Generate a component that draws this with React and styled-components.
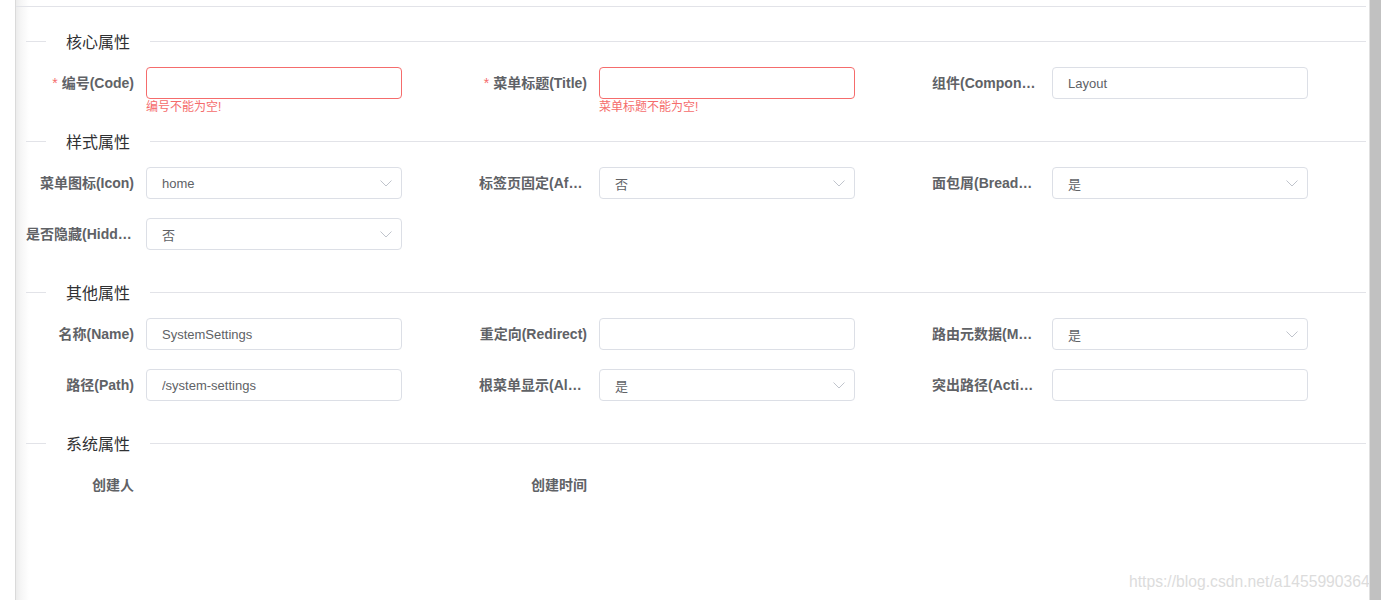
import React from 'react';
import styled, { createGlobalStyle } from 'styled-components';

const GlobalStyle = createGlobalStyle`
  html, body {
    margin: 0;
    padding: 0;
    height: 100%;
    overflow: hidden;
    background: #fff;
  }
  body {
    font-family: "Liberation Sans", Arial, "Noto Sans CJK SC", sans-serif;
    -webkit-font-smoothing: antialiased;
  }
  * { box-sizing: border-box; }
`;

const Page = styled.div`
  position: relative;
  display: flex;
  height: 600px;
  width: 100%;
  background: #fff;
`;

const Gutter = styled.div`
  width: 15px;
  flex: none;
  background: #fff;
`;

const Panel = styled.div`
  flex: 1;
  min-width: 0;
  overflow: hidden;
  border-left: 1px solid #dadada;
  background: linear-gradient(to right, #ececec 0, #f6f6f6 5px, #fff 13px) no-repeat;
  background-size: 13px 100%;
`;

const TopStrip = styled.div`
  height: 7px;
  border-bottom: 1px solid #e2e3e8;
`;

const Content = styled.div`
  padding: 0 0 0 10px;
`;

const Section = styled.section`
  display: flex;
  flex-direction: column;
`;

const SectionHeader = styled.div`
  display: flex;
  align-items: center;
  height: 21px;
  margin-top: ${p => (p.$first ? '24px' : '13px')};
  margin-bottom: 15px;
`;

const Rule = styled.div`
  height: 1px;
  background: #e2e3e8;
  width: ${p => p.$w || 'auto'};
  flex: ${p => (p.$grow ? 1 : 'none')};
`;

const SectionTitle = styled.span`
  margin: 0 20px;
  font-size: 16px;
  line-height: 21px;
  color: #303133;
  font-family: "Noto Sans CJK SC", sans-serif;
  font-weight: 400;
  white-space: nowrap;
`;

const Grid = styled.div`
  display: grid;
  grid-template-columns: repeat(3, 453px);
  row-gap: 19px;
  margin-bottom: 19px;
`;

const FormItem = styled.div`
  display: flex;
  align-items: flex-start;
  height: 32px;
`;

const Label = styled.label`
  flex: none;
  width: 120px;
  padding-right: 12px;
  height: 32px;
  line-height: 32px;
  text-align: right;
  font-size: 14px;
  font-weight: 700;
  color: #606266;
  white-space: nowrap;
  overflow: hidden;
  text-overflow: ellipsis;

  ${p => p.$required && `
    &::before {
      content: '*';
      color: #f56c6c;
      margin-right: 4px;
      font-weight: 400;
    }
  `}
`;

const Control = styled.div`
  position: relative;
  width: 256px;
  height: 32px;
`;

const Input = styled.input`
  display: block;
  width: 100%;
  height: 32px;
  padding: 0 30px 0 15px;
  border: 1px solid ${p => (p.$error ? '#f56c6c' : '#dcdfe6')};
  border-radius: 4px;
  background: #fff;
  font-family: "Liberation Sans", Arial, "Noto Sans CJK SC", sans-serif;
  font-size: 13px;
  color: #606266;
  outline: none;
`;

const Arrow = styled.svg`
  position: absolute;
  right: 10px;
  top: 13px;
  width: 12px;
  height: 7px;
  pointer-events: none;
`;

const ErrorText = styled.div`
  position: absolute;
  left: 0;
  top: 100%;
  padding-top: 2px;
  font-size: 12px;
  line-height: 13px;
  color: #f56c6c;
  white-space: nowrap;
`;

const ScrollTrack = styled.div`
  flex: none;
  width: 15px;
  padding-left: 3px;
  display: flex;
  position: relative;
  z-index: 2;
`;

const ScrollThumb = styled.div`
  flex: 1;
  border-left: 1px solid #e0e0e0;
  background: #c1c1c1;
`;

const Watermark = styled.div`
  position: absolute;
  left: 1129px;
  top: 573px;
  font-size: 15.7px;
  line-height: 18px;
  color: #dcdcdc;
  white-space: nowrap;
  z-index: 1;
  font-family: "Liberation Sans", Arial, sans-serif;
`;

const sections = [
  {
    title: '核心属性',
    fields: [
      { label: '编号(Code)', required: true, value: '', error: '编号不能为空!' },
      { label: '菜单标题(Title)', required: true, value: '', error: '菜单标题不能为空!' },
      { label: '组件(Component)', value: 'Layout' },
    ],
  },
  {
    title: '样式属性',
    fields: [
      { label: '菜单图标(Icon)', select: true, value: 'home' },
      { label: '标签页固定(Affix)', select: true, value: '否' },
      { label: '面包屑(Breadcrumb)', select: true, value: '是' },
      { label: '是否隐藏(Hidden)', select: true, value: '否' },
    ],
  },
  {
    title: '其他属性',
    fields: [
      { label: '名称(Name)', value: 'SystemSettings' },
      { label: '重定向(Redirect)', value: '' },
      { label: '路由元数据(Meta)', select: true, value: '是' },
      { label: '路径(Path)', value: '/system-settings' },
      { label: '根菜单显示(AlwaysShow)', select: true, value: '是' },
      { label: '突出路径(ActiveMenu)', value: '' },
    ],
  },
  {
    title: '系统属性',
    fields: [
      { label: '创建人', display: true },
      { label: '创建时间', display: true },
    ],
  },
];

function ChevronDown() {
  return (
    <Arrow viewBox="0 0 12 7" fill="none">
      <path d="M0.5 0.5 L6 6 L11.5 0.5" stroke="#c0c4cc" strokeWidth="1" />
    </Arrow>
  );
}

function Field({ f }) {
  return (
    <FormItem>
      <Label $required={f.required} title={f.label}>{f.label}</Label>
      {!f.display && (
        <Control>
          <Input readOnly value={f.value} $error={!!f.error} />
          {f.select && <ChevronDown />}
          {f.error && <ErrorText>{f.error}</ErrorText>}
        </Control>
      )}
    </FormItem>
  );
}

export default function App() {
  return (
    <>
      <GlobalStyle />
      <Page>
        <Gutter />
        <Panel>
          <TopStrip />
          <Content>
            {sections.map((s, i) => (
              <Section key={s.title}>
                <SectionHeader $first={i === 0}>
                  <Rule $w="20px" />
                  <SectionTitle>{s.title}</SectionTitle>
                  <Rule $grow />
                </SectionHeader>
                <Grid>
                  {s.fields.map(f => (
                    <Field key={f.label} f={f} />
                  ))}
                </Grid>
              </Section>
            ))}
          </Content>
        </Panel>
        <ScrollTrack>
          <ScrollThumb />
        </ScrollTrack>
        <Watermark>https://blog.csdn.net/a1455990364</Watermark>
      </Page>
    </>
  );
}
